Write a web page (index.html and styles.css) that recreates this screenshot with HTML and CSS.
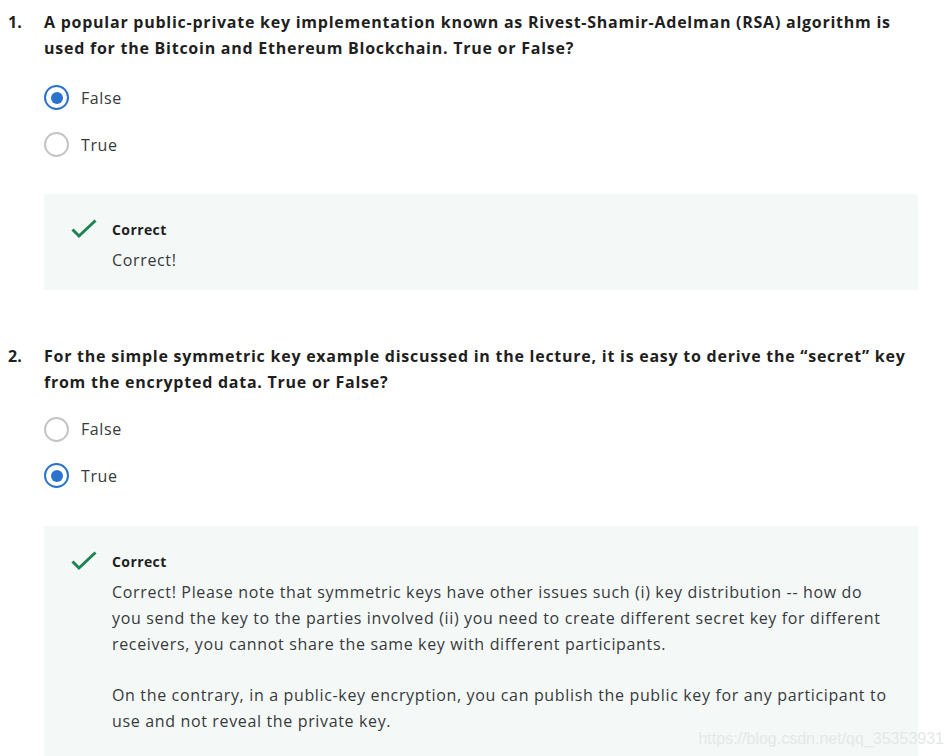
FILE: index.html
```html
<!DOCTYPE html>
<html>
<head>
<meta charset="utf-8">
<link rel="stylesheet" href="styles.css">
</head>
<body>
<div class="page">
  <section class="question q1">
    <div class="qhead">
      <span class="qnum">1.</span>
      <div class="qtext">A popular public-private key implementation known as Rivest-Shamir-Adelman (RSA) algorithm is used for the Bitcoin and Ethereum Blockchain. True or False?</div>
    </div>
    <div class="options">
      <div class="option"><span class="radio checked"></span><span class="label">False</span></div>
      <div class="option"><span class="radio"></span><span class="label">True</span></div>
    </div>
    <div class="feedback">
      <svg class="check" width="28" height="22" viewBox="0 0 28 22"><path d="M2.5 10.5 L9 17 L25.5 1.5" fill="none" stroke="#1f8354" stroke-width="3"/></svg>
      <div class="fbody">
        <div class="fhead">Correct</div>
        <p>Correct!</p>
      </div>
    </div>
  </section>
  <section class="question q2">
    <div class="qhead">
      <span class="qnum">2.</span>
      <div class="qtext">For the simple symmetric key example discussed in the lecture, it is easy to derive the “secret” key from the encrypted data. True or False?</div>
    </div>
    <div class="options">
      <div class="option"><span class="radio"></span><span class="label">False</span></div>
      <div class="option"><span class="radio checked"></span><span class="label">True</span></div>
    </div>
    <div class="feedback tall">
      <svg class="check" width="28" height="22" viewBox="0 0 28 22"><path d="M2.5 10.5 L9 17 L25.5 1.5" fill="none" stroke="#1f8354" stroke-width="3"/></svg>
      <div class="fbody">
        <div class="fhead">Correct</div>
        <p>Correct! Please note that symmetric keys have other issues such (i) key distribution -- how do you send the key to the parties involved (ii) you need to create different secret key for different receivers, you cannot share the same key with different participants.</p>
        <p>On the contrary, in a public-key encryption, you can publish the public key for any participant to use and not reveal the private key.</p>
      </div>
    </div>
  </section>
</div>
<div class="watermark">https://blog.csdn.net/qq_35353931</div>
</body>
</html>
```

FILE: styles.css
```css
html, body {
  margin: 0;
  padding: 0;
  background: #ffffff;
}
body {
  font-family: "Open Sans", "Noto Sans", sans-serif;
  color: #1f1f1f;
  width: 946px;
  height: 756px;
  overflow: hidden;
  position: relative;
}
.page {
  padding: 9px 28px 0 0;
}
.question + .question {
  margin-top: 53px;
}
.qhead {
  display: flex;
}
.qnum {
  width: 44px;
  box-sizing: border-box;
  padding-left: 8px;
  font-weight: 700;
  font-size: 16px;
  line-height: 26px;
  flex: none;
}
.qtext {
  font-weight: 700;
  font-size: 16px;
  line-height: 26px;
  letter-spacing: 0.75px;
  flex: 1;
}
.options {
  margin-left: 44px;
  margin-top: 13px;
  display: flex;
  flex-direction: column;
}
.option {
  display: flex;
  align-items: center;
  height: 47px;
}
.q2 .options {
  margin-top: 11.5px;
}
.q2 .option {
  height: 46.5px;
}
.radio {
  width: 25px;
  height: 25px;
  box-sizing: border-box;
  border-radius: 50%;
  border: 2px solid #c4c4c4;
  background: #fff;
  flex: none;
  position: relative;
}
.radio.checked {
  border-color: #2a73cc;
}
.radio.checked::after {
  content: "";
  position: absolute;
  left: 4.5px;
  top: 4.5px;
  width: 12px;
  height: 12px;
  border-radius: 50%;
  background: #2a73cc;
}
.label {
  margin-left: 12px;
  font-size: 16px;
  letter-spacing: 0.6px;
  color: #373a3c;
  line-height: 24px;
}
.feedback {
  margin-left: 44px;
  margin-top: 26px;
  background: #f4f8f7;
  padding: 25px 25px 17px 26px;
  display: flex;
  align-items: flex-start;
}
.q2 .feedback {
  margin-top: 27px;
}
.feedback.tall {
  height: 300px;
}
.check {
  flex: none;
  margin-top: 0;
}
.fbody {
  margin-left: 14px;
}
.fhead {
  font-weight: 700;
  font-size: 14px;
  line-height: 22px;
  letter-spacing: 0.4px;
  color: #1f1f1f;
}
.fbody p {
  margin: 5.5px 0 0 0;
  font-size: 16px;
  line-height: 26px;
  letter-spacing: 0.65px;
  color: #373a3c;
}
.fbody p + p {
  margin-top: 25px;
}
.watermark {
  position: absolute;
  right: 2px;
  bottom: 8px;
  font-family: "Liberation Sans", Arial, sans-serif;
  font-size: 16px;
  color: #e4e8e8;
}
```
